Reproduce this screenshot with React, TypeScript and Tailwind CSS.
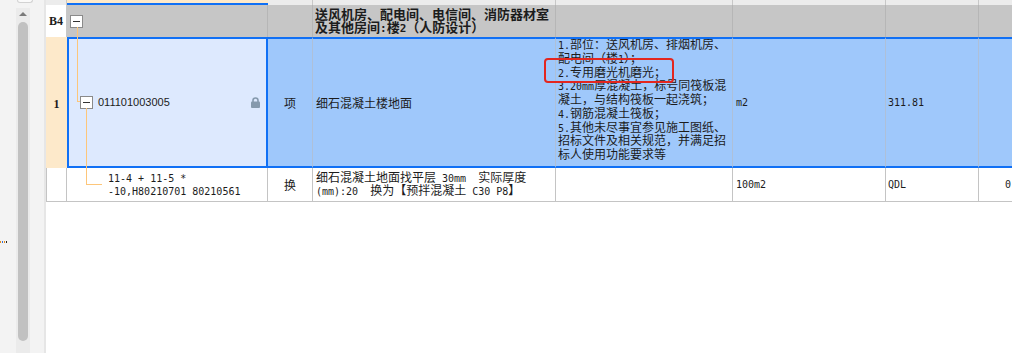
import React from "react"

// column template shared by every table row
const cols = "grid grid-cols-[21px_201px_45px_243px_177px_153px_93px_1fr]"

const cjk = "font-['Noto_Sans_CJK_SC',sans-serif]"
const mixed = "font-['DejaVu_Sans_Mono','Noto_Sans_CJK_SC',monospace]"

// half-width latin runs are narrower, like the bitmap SimSun of the original
function Mixed({ text }: { text: string }) {
  const parts = text.split(/([\x00-\x7F]+)/).filter(Boolean)
  return (
    <>
      {parts.map((p, i) =>
        /^[\x00-\x7F]+$/.test(p) ? (
          <span key={i} className="text-[10px]">
            {p}
          </span>
        ) : (
          <span key={i}>{p}</span>
        )
      )}
    </>
  )
}

const descLines = [
  "1.部位：送风机房、排烟机房、",
  "配电间（楼1）；",
  "2.专用磨光机磨光；",
  "3.20mm厚混凝土，标号同筏板混",
  "凝土，与结构筏板一起浇筑；",
  "4.钢筋混凝土筏板；",
  "5.其他未尽事宜参见施工图纸、",
  "招标文件及相关规范，并满足招",
  "标人使用功能要求等",
]

function MinusBox() {
  return (
    <div className="flex h-[13px] w-[13px] shrink-0 items-center justify-center border border-[#8a8a8a] bg-white">
      <div className="h-px w-[7px] bg-[#333]" />
    </div>
  )
}

function Lock() {
  return (
    <svg width="9" height="11" viewBox="0 0 9 11" className="shrink-0">
      <path d="M2 5V3.5a2.5 2.5 0 0 1 5 0V5" fill="none" stroke="#8599ad" strokeWidth="1.6" />
      <rect x="0" y="4.5" width="9" height="6.5" rx="1" fill="#8599ad" />
    </svg>
  )
}

function SidePanel() {
  return (
    <div className="relative flex h-[353px] w-[46px] shrink-0 flex-col border-r-2 border-[#e6e6e6] bg-[#f3f3f3]">
      <div className="ml-[17px] h-[3px] w-[16px] rounded-b-[3px] border border-t-0 border-[#d2d2d2] bg-[#fafafa]" />
      <div className="mt-[5px] ml-[16px] flex w-[14px] flex-1 flex-col items-center bg-[#ebebeb] pt-[4px]">
        <div className="h-0 w-0 border-r-[4px] border-b-[4px] border-l-[4px] border-r-transparent border-b-[#7a7a7a] border-l-transparent" />
        <div className="mt-[6px] h-[319px] w-[10px] rounded-full bg-[#c1c1c1]" />
      </div>
      {/* stray marker at the left edge */}
      <div className="absolute top-[241px] left-0 flex gap-px">
        <span className="h-[2px] w-[1px] bg-[#e08a1e]" />
        <span className="h-[2px] w-[1px] bg-[#3a6fd0]" />
        <span className="h-[2px] w-[1px] bg-[#e08a1e]" />
        <span className="h-[2px] w-[1px] bg-[#222]" />
      </div>
    </div>
  )
}

export default function App() {
  return (
    <div className="relative flex h-[353px] w-[1012px] overflow-hidden bg-white text-[#1c1c1c]">
      <SidePanel />

      <div className="relative flex-1">
        {/* row above, mostly scrolled out */}
        <div className={`${cols} h-[5px]`}>
          <div className="border-r border-[#c8c8c8] bg-[#ececec]" />
          <div className="border-b-2 border-[#1070f5] bg-[#fde9ca]" />
          <div className="border-r border-[#c8c8c8] bg-[#ececec]" />
          <div className="border-r border-[#c8c8c8] bg-[#ececec]" />
          <div className="border-r border-[#c8c8c8] bg-[#ececec]" />
          <div className="border-r border-[#c8c8c8] bg-[#ececec]" />
          <div className="border-r border-[#c8c8c8] bg-[#ececec]" />
          <div className="bg-[#ececec]" />
        </div>

        {/* B4 group header */}
        <div className={`${cols} h-[32px]`}>
          <div className="flex items-center justify-center border-r border-[#c8c8c8] bg-white font-['Liberation_Serif',serif] text-[12px] font-bold">
            B4
          </div>
          <div className="flex items-center border-r border-[#b6b6b6] bg-[#c6c6c6] pl-[3px]">
            <MinusBox />
          </div>
          <div className="border-r border-[#b6b6b6] bg-[#c6c6c6]" />
          <div className={`flex flex-col justify-center border-r border-[#b6b6b6] bg-[#c6c6c6] pl-[2px] ${mixed} text-[13px] leading-[13px] font-bold whitespace-pre`}>
            <div>送风机房、配电间、电信间、消防器材室</div>
            <div>
              及其他房间<span className="text-[11px]">:</span>楼<span className="text-[11px]">2</span>（人防设计）
            </div>
          </div>
          <div className="border-r border-[#b6b6b6] bg-[#c6c6c6]" />
          <div className="border-r border-[#b6b6b6] bg-[#c6c6c6]" />
          <div className="border-r border-[#b6b6b6] bg-[#c6c6c6]" />
          <div className="bg-[#c6c6c6]" />
        </div>

        {/* selected item row */}
        <div className={`${cols} h-[131px]`}>
          <div className="flex items-center justify-center bg-[#fde9ca] pt-[2px] font-['Liberation_Serif',serif] text-[12px] font-bold">
            1
          </div>
          <div className="flex items-center border-2 border-[#1070f5] bg-[#dde9fe] pr-[6px] pl-[11px]">
            <MinusBox />
            <span className="ml-[5px] font-['Liberation_Sans',sans-serif] text-[11px]">011101003005</span>
            <span className="ml-auto">
              <Lock />
            </span>
          </div>
          <div className={`flex items-center justify-center border-y-2 border-r border-[#1070f5] border-r-[#aec0d8] bg-[#9fc8fb] ${cjk} text-[12px]`}>
            项
          </div>
          <div className={`flex items-center border-y-2 border-r border-[#1070f5] border-r-[#aec0d8] bg-[#9fc8fb] pl-[3px] ${cjk} text-[12px]`}>
            细石混凝土楼地面
          </div>
          <div className={`overflow-hidden border-y-2 border-r border-[#1070f5] border-r-[#aec0d8] bg-[#9fc8fb] pl-[2px] ${mixed} text-[12px] leading-[13.75px] whitespace-nowrap`}>
            {descLines.map((l) => (
              <div key={l}>
                <Mixed text={l} />
              </div>
            ))}
          </div>
          <div className={`flex items-center border-y-2 border-r border-[#1070f5] border-r-[#aec0d8] bg-[#9fc8fb] pl-[3px] ${mixed} text-[10px]`}>
            m2
          </div>
          <div className={`flex items-center border-y-2 border-r border-[#1070f5] border-r-[#aec0d8] bg-[#9fc8fb] pl-[2px] ${mixed} text-[10px]`}>
            311.81
          </div>
          <div className="border-y-2 border-[#1070f5] bg-[#9fc8fb]" />
        </div>

        {/* conversion sub row */}
        <div className={`${cols} h-[34px]`}>
          <div className="border-r border-b border-l border-[#c4c4c4] bg-white" />
          <div className={`flex flex-col justify-center border-r border-b border-[#c4c4c4] pl-[41px] ${mixed} text-[10px] leading-[13px] whitespace-pre`}>
            <div>11-4 + 11-5 *</div>
            <div>-10,H80210701 80210561</div>
          </div>
          <div className={`flex items-center justify-center border-r border-b border-[#c4c4c4] ${cjk} text-[12px]`}>
            换
          </div>
          <div className={`flex flex-col justify-center border-r border-b border-[#c4c4c4] pl-[3px] ${mixed} text-[12px] leading-[13px] whitespace-pre`}>
            <div>
              <Mixed text="细石混凝土地面找平层 30mm  实际厚度" />
            </div>
            <div>
              <Mixed text="(mm):20  换为【预拌混凝土 C30 P8】" />
            </div>
          </div>
          <div className="border-r border-b border-[#c4c4c4]" />
          <div className={`flex items-center border-r border-b border-[#c4c4c4] pl-[3px] ${mixed} text-[10px]`}>
            100m2
          </div>
          <div className={`flex items-center border-r border-b border-[#c4c4c4] pl-[2px] ${mixed} text-[10px]`}>
            QDL
          </div>
          <div className={`flex items-center border-b border-[#c4c4c4] pl-[26px] ${mixed} text-[10px]`}>
            0
          </div>
        </div>

        {/* tree connector lines */}
        <div className="absolute top-[27px] left-[31px] h-[74px] w-px bg-[#fdc67a]" />
        <div className="absolute top-[101px] left-[31px] h-px w-[3px] bg-[#fdc67a]" />
        <div className="absolute top-[108px] left-[40px] h-[76px] w-px bg-[#fdc67a]" />
        <div className="absolute top-[184px] left-[40px] h-px w-[16px] bg-[#fdc67a]" />
      </div>

      {/* red annotation box */}
      <div className="absolute top-[58px] left-[544px] h-[25px] w-[130px] rounded-[4px] border-2 border-[#e3261f]" />
    </div>
  )
}
